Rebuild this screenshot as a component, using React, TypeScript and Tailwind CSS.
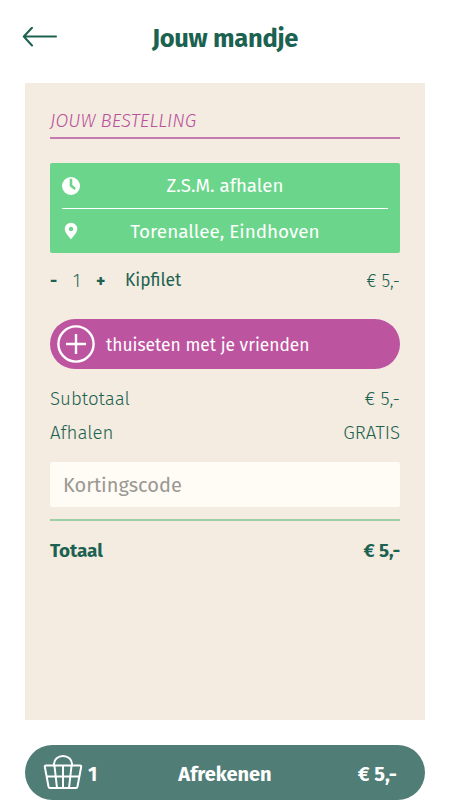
import React from "react";

function BackArrow() {
  return (
    <svg width="36" height="22" viewBox="0 0 36 22" fill="none" stroke="#1c6251" strokeWidth="2" strokeLinecap="round" strokeLinejoin="round">
      <path d="M34 9.500H2M10 .8L1.800 9.500L10 18.500" />
    </svg>
  );
}

function ClockIcon() {
  return (
    <svg width="18" height="18" viewBox="0 0 18 18">
      <circle cx="9" cy="9" r="9" fill="#fff" />
      <path d="M9 1.800V8.600L13.200 12" fill="none" stroke="#6bd68b" strokeWidth="2.600" />
    </svg>
  );
}

function PinIcon() {
  return (
    <svg width="18" height="18" viewBox="0 0 18 18">
      <path fillRule="evenodd" fill="#fff" d="M9 .8a6.2 6.2 0 0 0-6.2 6.2c0 3.2 3.2 6.6 6.2 10.3 3-3.700 6.200-7.100 6.200-10.300A6.200 6.200 0 0 0 9 .8Zm0 4a2.200 2.200 0 1 1 0 4.400a2.200 2.200 0 0 1 0-4.400Z" />
    </svg>
  );
}

function PlusCircle() {
  return (
    <svg width="38" height="38" viewBox="0 0 38 38" fill="none" stroke="#fff" strokeWidth="2.4">
      <circle cx="19" cy="19" r="17.600" />
      <path d="M9 19H29M19 9V29" />
    </svg>
  );
}

function BasketIcon() {
  return (
    <svg width="40" height="36" viewBox="0 0 40 36" fill="none" stroke="#fff" strokeWidth="2" strokeLinejoin="round" strokeLinecap="round">
      <path d="M11 10.500V9C11 4.500 15 1 20 1S29 4.500 29 9V10.500" />
      <path d="M3 10.500H37Q38.500 10.500 38.200 11.800L34.500 31.500Q34.200 33 33 33H7Q5.800 33 5.500 31.500L1.800 11.800Q1.500 10.500 3 10.500Z" />
      <path d="M4 21.500H36M11.500 11L14 33M20 11V33M28.500 11L26 33" />
    </svg>
  );
}

export default function App() {
  return (
    <div className="flex h-[800px] w-[450px] flex-col overflow-hidden bg-white font-['Fira_Sans','Noto_Sans',sans-serif] text-[18.900px] whitespace-nowrap text-[#1c6251]">
      <header className="grid h-[83px] grid-cols-[60px_1fr_60px] items-center pb-[8px]">
        <div className="pl-[22px]"><BackArrow /></div>
        <h1 className="pt-[3px] text-center text-[25.500px] font-bold tracking-[-0.300px]">Jouw mandje</h1>
      </header>

      <main className="mx-[25px] flex h-[637px] flex-col bg-[#f4ece0] px-[25px]">
        <h2 className="mt-[25px] flex h-[31px] items-center border-b-2 border-[#c47bb0] pb-[2px] text-[18.700px] font-light italic text-[#b9529e]">
          JOUW BESTELLING
        </h2>

        <section className="mt-[24px] flex h-[90px] flex-col rounded-[2px] bg-[#6bd68b] px-[12px] text-white">
          <div className="grid h-[46px] grid-cols-[18px_1fr_18px] items-center border-b border-white">
            <ClockIcon />
            <span className="pt-[2px] text-center text-[18.700px]">Z.S.M. afhalen</span>
          </div>
          <div className="grid h-[44px] grid-cols-[18px_1fr_18px] items-center">
            <PinIcon />
            <span className="pt-[2px] text-center">Torenallee, Eindhoven</span>
          </div>
        </section>

        <section className="mt-[14px] flex h-[28px] items-center text-[17.600px]">
          <button className="w-[23px] pt-[3px] text-left font-bold">-</button>
          <span className="w-[23px] pt-[2px] font-light">1</span>
          <button className="w-[29px] pt-[3px] text-left font-bold">+</button>
          <span className="text-[17.400px]">Kipfilet</span>
          <span className="ml-auto text-[17.800px] font-light">€ 5,-</span>
        </section>

        <button className="mt-[24.400px] flex h-[50px] shrink-0 items-center rounded-full bg-[#bd549f] pl-[7px] text-[17.400px] text-white">
          <PlusCircle />
          <span className="ml-[11px] pt-[3px]">thuiseten met je vrienden</span>
        </button>

        <dl className="mt-[12.600px] text-[18.700px] font-light">
          <div className="flex h-[34px] items-center justify-between"><dt>Subtotaal</dt><dd>€ 5,-</dd></div>
          <div className="flex h-[34px] items-center justify-between"><dt>Afhalen</dt><dd>GRATIS</dd></div>
        </dl>

        <input className="mt-[12px] h-[45px] shrink-0 rounded-[2px] bg-[#fffbf5] px-[13px] pt-[2px] text-[20px] placeholder:text-[#9b9893]" placeholder="Kortingscode" />

        <div className="mt-[12px] flex h-[48px] items-center justify-between border-t-2 border-[#9ccfa5] pt-[15px] font-bold tracking-[-0.100px]">
          <span>Totaal</span>
          <span>€ 5,-</span>
        </div>
      </main>

      <button className="mx-[25px] mt-[25px] grid h-[55px] grid-cols-[85px_1fr_75px] items-center rounded-full bg-[#507d76] pr-[28px] pl-[18px] text-[20px] font-bold text-white">
        <span className="flex items-center gap-[5px]"><BasketIcon /><span className="pt-[2px]">1</span></span>
        <span className="pt-[2px] text-center">Afrekenen</span>
        <span className="pt-[2px] text-right">€ 5,-</span>
      </button>
    </div>
  );
}
